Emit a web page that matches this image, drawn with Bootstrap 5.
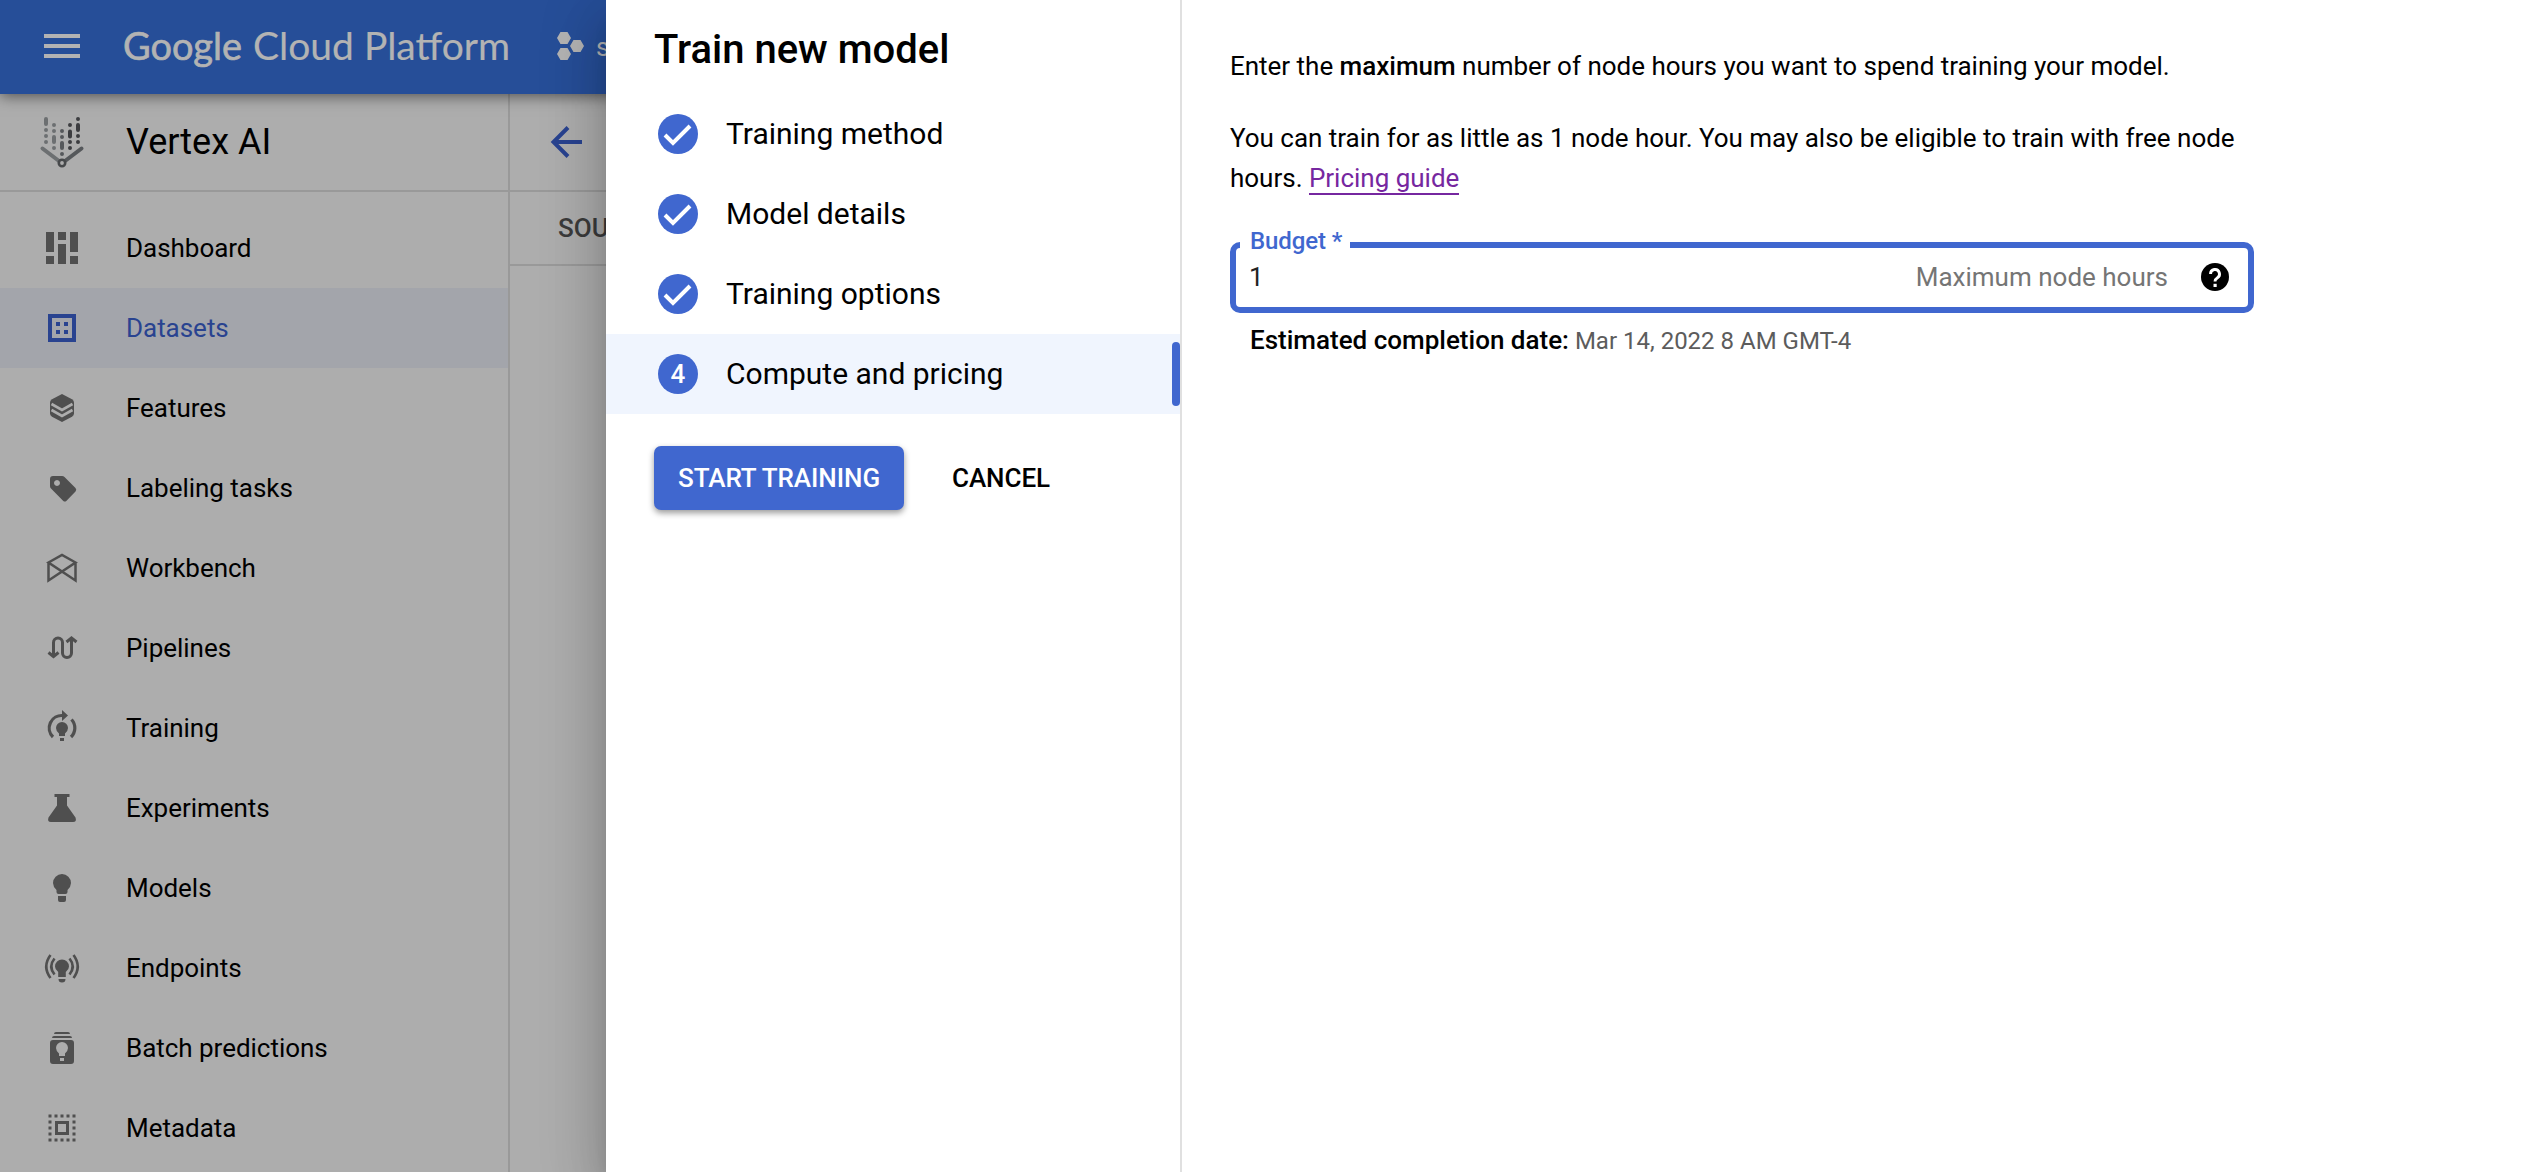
<!DOCTYPE html>
<html lang="en">
<head>
<meta charset="utf-8">
<title>Train new model</title>
<link href="https://cdn.jsdelivr.net/npm/bootstrap@5.3.0/dist/css/bootstrap.min.css" rel="stylesheet">
<style>
  body { font-family: Roboto, "Liberation Sans", sans-serif; font-size: 26px; color: #000; background: #adadad; }
  .topbar { height: 94px; background: #264e98; color: #b3b3b3; box-shadow: 0 2px 14px rgba(0,0,0,.55); z-index: 2; padding-left: 44px; }
  .brand-text { font-family: Lato, sans-serif; fill: #b3b3b3; }
  .side { width: 510px; border-right: 2px solid #999; }
  .side-head { height: 98px; border-bottom: 2px solid #999; font-size: 36px; }
  .side-ico { width: 126px; padding-left: 44px; flex: none; line-height: 0; }
  .side-ico svg { width: 36px; height: 36px; overflow: visible; }
  .side-ico svg.vertex { width: 44px; height: 54px; margin-left: -4px; }
  .side .nav { padding-top: 16px; }
  .side .nav-link { height: 80px; padding: 0; color: #000; letter-spacing: -.03px; }
  .side .nav-link .side-ico { color: #4f4f4f; }
  .side .nav-link.active, .side .nav-link.active .side-ico { color: #294390; }
  .side .nav-link.active { background: #a3a5ab; }
  .back-bar { height: 98px; border-bottom: 2px solid #999; padding-left: 40px; }
  .tab-bar { height: 74px; border-bottom: 2px solid #999; padding-left: 48px; color: #3b3b3b; font-weight: 500; }
  .drawer { left: 606px; z-index: 5; box-shadow: 0 16px 20px -10px rgba(0,0,0,.2), 0 32px 48px 4px rgba(0,0,0,.14), 0 12px 60px 10px rgba(0,0,0,.12); }
  .steps { width: 576px; border-right: 2px solid #e0e0e0; flex: none; }
  .steps h1 { font-size: 40px; font-weight: 500; height: 94px; line-height: 60px; padding: 20px 0 0 48px; margin: 0; }
  .step { height: 80px; padding-left: 52px; gap: 28px; font-size: 30px; }
  .step-name { padding-bottom: 2px; }
  .step.current { background: #f0f5fe; }
  .step.current::after { content: ""; width: 8px; height: 64px; border-radius: 4px; background: #4067cf; margin-left: auto; }
  .dot { width: 40px; height: 40px; background: #4067cf; color: #fff; font-size: 26px; font-weight: 500; }
  .actions { padding: 32px 0 0 48px; }
  .actions .btn { height: 64px; font-size: 26px; font-weight: 500; line-height: 1; border: 0; border-radius: 7px; padding: 0 24px; letter-spacing: -.07px; }
  .btn-start { background: #4067cf; color: #fff; box-shadow: 0 3px 6px rgba(0,0,0,.4); }
  .content { padding: 46px 0 0 48px; line-height: 40px; }
  .content p { margin: 0; width: 1024px; letter-spacing: -.015px; }
  .content p + p { margin-top: 32px; }
  .content b { font-weight: 500; }
  .guide { color: #7627a0; text-decoration: none; border-bottom: 2px solid #7627a0; }
  .budget { width: 1024px; height: 71px; border: 6px solid #4067cf; border-radius: 10px; margin-top: 44px; padding: 0 19px 1px 13px; }
  .budget label { position: absolute; left: 4px; top: -25px; height: 36px; line-height: 36px; width: 110px; padding-left: 10px; background: #fff; color: #4067cf; font-size: 24px; font-weight: 500; letter-spacing: -.1px; }
  .budget input { border: 0; outline: 0; padding: 0; width: 300px; color: #222; }
  .suffix { color: #757575; padding-right: 33px; }
  .hint { font-size: 24px; padding-left: 20px; margin-top: 7px; color: #5c5c5c; }
  .hint b { color: #000; font-size: 26px; }
</style>
<script src="https://cdn.jsdelivr.net/npm/bootstrap@5.3.0/dist/js/bootstrap.bundle.min.js"></script>
</head>
<body class="vh-100 overflow-hidden d-flex flex-column position-relative">

<header class="topbar navbar flex-nowrap justify-content-start position-relative py-0">
  <svg width="38" height="94" viewBox="0 0 38 94" fill="#b3b3b3"><path d="M0 34h36v4H0zM0 44h36v4H0zM0 54h36v4H0z"/></svg>
  <svg width="470" height="94" viewBox="0 0 470 94">
    <text class="brand-text" x="41" y="60" font-size="39.500" textLength="119" lengthAdjust="spacingAndGlyphs" stroke="#b3b3b3" stroke-width=".7">Google</text>
    <text class="brand-text" x="171" y="60" font-size="39.500" textLength="257" lengthAdjust="spacingAndGlyphs" stroke="#b3b3b3" stroke-width=".2">Cloud Platform</text>
  </svg>
  <svg width="44" height="94" viewBox="0 0 44 94" fill="#b3b3b3"><path d="M8.500 32h7l3.500 6-3.500 6h-7l-3.500-6zM21.500 40h7l3.500 6-3.500 6h-7l-3.500-6zM8.500 48h7l3.500 6-3.500 6h-7l-3.500-6z"/></svg>
  <span>s</span>
</header>

<div class="d-flex flex-grow-1">
  <aside class="side d-flex flex-column flex-shrink-0">
    <div class="side-head d-flex align-items-center flex-shrink-0">
      <span class="side-ico"><svg class="vertex" viewBox="0 0 44 54" fill="none" stroke-linecap="round">
        <g stroke="#6c6f71" stroke-width="4"><path d="M6 4v5M6 15v.01M6 21v.01M6 27v.01M14 10v.01M14 16v.01M14 22v5M14 33v.01"/><path d="M2.500 33.500 19 46"/></g>
        <g stroke="#55585b" stroke-width="4"><path d="M22 16v.01M22 22v.01M22 28v5M22 39v.01M41.500 33.500 25 46"/></g>
        <g stroke="#3c3d40" stroke-width="4"><path d="M30 10v.01M30 16.500v5M30 27v.01M30 33v.01M38 4v.01M38 10v5M38 21v.01M38 27v.01"/></g>
        <circle cx="22" cy="48" r="3.200" fill="#adadad" stroke="#47494b" stroke-width="2.600"/></svg></span>
      <span>Vertex AI</span>
    </div>
    <nav class="nav flex-column flex-nowrap">
      <a class="nav-link d-flex align-items-center"><span class="side-ico"><svg viewBox="0 0 36 36" fill="currentColor"><path d="M2 2h8v20H2zM2 26h8v8H2zM14 2h8v8h-8zM14 14h8v20h-8zM26 2h8v20h-8zM26 26h8v8h-8z"/></svg></span>Dashboard</a>
      <a class="nav-link active d-flex align-items-center"><span class="side-ico"><svg viewBox="0 0 36 36"><path d="M6 6h24v24H6z" fill="none" stroke="currentColor" stroke-width="4"/><path fill="currentColor" d="M12 12h4v4h-4zM20 12h4v4h-4zM12 20h4v4h-4zM20 20h4v4h-4z"/></svg></span>Datasets</a>
      <a class="nav-link d-flex align-items-center"><span class="side-ico"><svg viewBox="0 0 36 36"><path fill="currentColor" d="M18 4l10 5.200q2 1.200 2 3.300v11q0 2-2 3.200L18 32 8 26.700q-2-1.200-2-3.200v-11q0-2.100 2-3.300z"/><path d="M7.500 14 18 20l10.500-6M7.500 20 18 26l10.500-6" fill="none" stroke="#adadad" stroke-width="2.600"/></svg></span>Features</a>
      <a class="nav-link d-flex align-items-center"><span class="side-ico"><svg viewBox="0 0 36 36"><path fill="currentColor" fill-rule="evenodd" d="M9 6h9q1.500 0 2.500 1l11 11q1.500 1.700 0 3.400l-9.200 9.600q-1.500 1.200-3 0L7 18.500q-1-1-1-2.500V9q0-3 3-3zM13 10a3 3 0 1 0 .01 0z"/></svg></span>Labeling tasks</a>
      <a class="nav-link d-flex align-items-center"><span class="side-ico"><svg viewBox="0 0 36 36" fill="none" stroke="currentColor" stroke-width="2.500"><path d="M4.500 13v17.500L31.500 12.500 18 5 4.500 12.500 31.500 30.500V12"/></svg></span>Workbench</a>
      <a class="nav-link d-flex align-items-center"><span class="side-ico"><svg viewBox="0 0 36 36" fill="none" stroke="currentColor" stroke-width="3"><path d="M9.500 26V12.500a4.500 4.500 0 0 1 9 0v10.500a4.500 4.500 0 0 0 9 0V9"/><path d="M4.500 22.500l5 4 5-4M22.500 12l5-4 5 4"/></svg></span>Pipelines</a>
      <a class="nav-link d-flex align-items-center"><span class="side-ico"><svg viewBox="0 0 36 36"><path d="M9 27A12.500 12.500 0 0 1 19 5.600M27.500 9.500A12.500 12.500 0 0 1 27 27" fill="none" stroke="currentColor" stroke-width="3.200"/><path fill="currentColor" d="M18 0l6 5.500-6 5.500zM18 12a6 6 0 0 1 6 6q0 3-3 5.500v2.500h-6v-2.500q-3-2.500-3-5.500a6 6 0 0 1 6-6zM16 28h4v3h-4z"/></svg></span>Training</a>
      <a class="nav-link d-flex align-items-center"><span class="side-ico"><svg viewBox="0 0 36 36" fill="currentColor"><path d="M10.500 4h15v3H23v8.500l8.500 12q1.500 4.500-2.500 4.500H7q-4 0-2.500-4.500L13 15.500V7h-2.500z"/></svg></span>Experiments</a>
      <a class="nav-link d-flex align-items-center"><span class="side-ico"><svg viewBox="0 0 36 36" fill="currentColor"><path d="M18 4a9 9 0 0 1 9 9q0 3.500-3.500 7v2q0 2-2 2h-7q-2 0-2-2v-2Q9 16.500 9 13a9 9 0 0 1 9-9zM14 26h8v4q0 2-2 2h-4q-2 0-2-2z"/></svg></span>Models</a>
      <a class="nav-link d-flex align-items-center"><span class="side-ico"><svg viewBox="0 0 36 36"><path fill="currentColor" d="M18 9.500a7 7 0 0 1 7 7q0 3-3.200 5.500V27h-7.600v-5Q11 19.500 11 16.500a7 7 0 0 1 7-7zM14.500 29h7q0 3.500-3.500 3.500T14.500 29z"/><path d="M6.500 5Q-2 16.500 6.500 28M10.500 8.500Q4 16.500 10.500 24.500M29.500 5Q38 16.500 29.500 28M25.500 8.500Q32 16.500 25.500 24.500" fill="none" stroke="currentColor" stroke-width="2.600"/></svg></span>Endpoints</a>
      <a class="nav-link d-flex align-items-center"><span class="side-ico"><svg viewBox="0 0 36 36"><path fill="currentColor" d="M10 4q0-2 2-2h12q2 0 2 2zM8 8q0-2 2-2h16q2 0 2 2zM9 10h18q3 0 3 3v18q0 3-3 3H9q-3 0-3-3V13q0-3 3-3z"/><path fill="#adadad" d="M18 12a6 6 0 0 1 6 6q0 2.800-3 5.500v2.500h-6v-2.500q-3-2.700-3-5.500a6 6 0 0 1 6-6zM16 28h4v3h-4z"/></svg></span>Batch predictions</a>
      <a class="nav-link d-flex align-items-center"><span class="side-ico"><svg viewBox="0 0 36 36" fill="none" stroke="currentColor"><path d="M12.500 12.500h11v11h-11z" stroke-width="3"/><path d="M4.500 6h28M4.500 30h28" stroke-width="3" stroke-dasharray="3 3"/><path d="M6 10.500v18M30 10.500v18" stroke-width="3" stroke-dasharray="3 3"/></svg></span>Metadata</a>
    </nav>
  </aside>
  <main class="flex-grow-1">
    <div class="back-bar d-flex align-items-center"><svg width="34" height="34" viewBox="0 0 34 34" fill="none" stroke="#294390" stroke-width="4"><path d="M32 17H4M18 2.500 3.500 17 18 31.500"/></svg></div>
    <div class="tab-bar d-flex align-items-center">SOURCE</div>
  </main>
</div>

<section class="drawer position-absolute top-0 bottom-0 end-0 bg-white d-flex">
  <div class="steps">
    <h1>Train new model</h1>
    <div class="step d-flex align-items-center"><span class="dot rounded-circle"><svg class="d-block" width="40" height="40" viewBox="0 0 40 40" fill="none" stroke="#fff" stroke-width="4"><path d="M7 21l8 8L32 12"/></svg></span><span class="step-name">Training method</span></div>
    <div class="step d-flex align-items-center"><span class="dot rounded-circle"><svg class="d-block" width="40" height="40" viewBox="0 0 40 40" fill="none" stroke="#fff" stroke-width="4"><path d="M7 21l8 8L32 12"/></svg></span><span class="step-name">Model details</span></div>
    <div class="step d-flex align-items-center"><span class="dot rounded-circle"><svg class="d-block" width="40" height="40" viewBox="0 0 40 40" fill="none" stroke="#fff" stroke-width="4"><path d="M7 21l8 8L32 12"/></svg></span><span class="step-name">Training options</span></div>
    <div class="step current d-flex align-items-center"><span class="dot rounded-circle d-flex align-items-center justify-content-center">4</span><span class="step-name">Compute and pricing</span></div>
    <div class="actions d-flex">
      <button class="btn btn-start">START TRAINING</button>
      <button class="btn ms-4 text-black">CANCEL</button>
    </div>
  </div>
  <div class="content">
    <p>Enter the <b>maximum</b> number of node hours you want to spend training your model.</p>
    <p>You can train for as little as 1 node hour. You may also be eligible to train with free node hours. <a class="guide">Pricing guide</a></p>
    <div class="budget position-relative d-flex align-items-center">
      <label for="budget">Budget *</label>
      <input id="budget" value="1">
      <span class="suffix ms-auto">Maximum node hours</span>
      <svg width="28" height="28" viewBox="0 0 28 28"><circle cx="14" cy="14" r="14"/><path d="M9.500 11a4.500 4.500 0 1 1 6.700 3.900q-2.200 1.300-2.200 3.600" fill="none" stroke="#fff" stroke-width="2.900"/><path d="M12.500 20.800h3.200v3.200h-3.200z" fill="#fff"/></svg>
    </div>
    <div class="hint"><b>Estimated completion date:</b> Mar 14, 2022 8 AM GMT-4</div>
  </div>
</section>
</body>
</html>
